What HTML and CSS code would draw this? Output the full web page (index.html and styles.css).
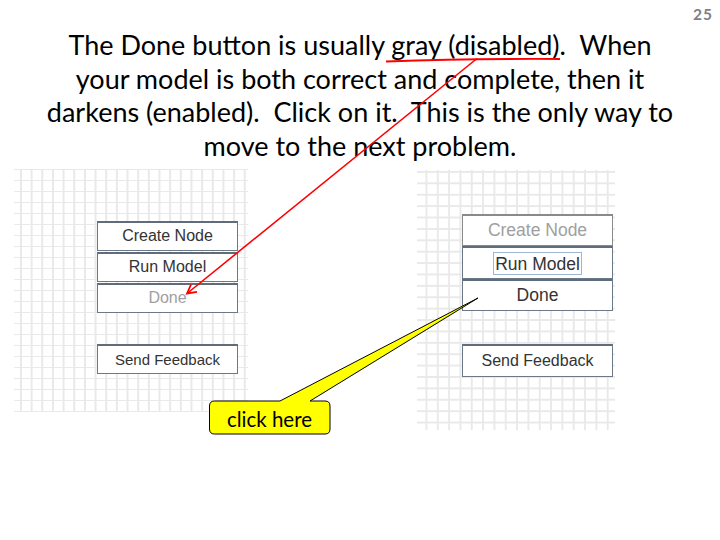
FILE: index.html
```html
<!DOCTYPE html>
<html>
<head>
<meta charset="utf-8">
<link rel="stylesheet" href="styles.css">
</head>
<body>
<div class="slide">
  <div class="num">25</div>
  <p class="title">The Done button is usually gray (disabled).&nbsp; When<br>your model is both correct and complete, then it<br>darkens (enabled).&nbsp; Click on it.&nbsp; This is the only way to<br>move to the next problem.</p>
  <div class="shots">
    <div class="grid grid-left">
      <div class="stack">
        <div class="btn">Create Node</div>
        <div class="btn">Run Model</div>
        <div class="btn off">Done</div>
      </div>
      <div class="btn feedback">Send Feedback</div>
    </div>
    <div class="grid grid-right">
      <div class="stack">
        <div class="btn off grayb">Create Node</div>
        <div class="btn"><span class="focus">Run Model</span></div>
        <div class="btn">Done</div>
      </div>
      <div class="btn feedback">Send Feedback</div>
    </div>
  </div>
  <svg class="overlay" width="720" height="540" viewBox="0 0 720 540">
    <path d="M386 61.5 Q 470 58.5 560 59" fill="none" stroke="#f00" stroke-width="1.8"/>
    <line x1="477" y1="58.5" x2="187" y2="293.5" stroke="#f00" stroke-width="1.6"/>
    <polyline points="197,291.8 187,293.5 191,284.6" fill="none" stroke="#f00" stroke-width="1.8" stroke-linejoin="miter"/>
    <path d="M214.5 401 H280 L478 298 L310 401 H325 Q330 401 330 406 V429 Q330 434 325 434 H214.5 Q209.5 434 209.5 429 V406 Q209.5 401 214.5 401 Z" fill="#ffff00" stroke="#000" stroke-width="1"/>
    <text x="269.5" y="427" class="callout-text" text-anchor="middle">click here</text>
  </svg>
</div>
</body>
</html>
```
FILE: styles.css
```css
html, body {
  margin: 0;
  padding: 0;
  background: #fff;
}
.slide {
  position: relative;
  width: 720px;
  height: 540px;
  overflow: hidden;
  font-family: Lato, "Open Sans", sans-serif;
}
.num {
  position: absolute;
  top: 5px;
  right: 7px;
  font-family: Lato, sans-serif;
  font-weight: bold;
  font-size: 15.5px;
  letter-spacing: 1px;
  color: #7f7f7f;
}
.title {
  margin: 0;
  padding-top: 28px;
  text-align: center;
  font-size: 27px;
  line-height: 33.7px;
  color: #000;
}
.shots {
  display: flex;
  align-items: flex-start;
  padding-left: 14px;
  margin-top: 6px;
}
.grid {
  box-sizing: border-box;
  background-color: #fff;
  background-image:
    linear-gradient(to right, #e9e9e9 1.5px, transparent 1.5px),
    linear-gradient(to bottom, #e9e9e9 1.5px, transparent 1.5px);
}
.grid-left {
  width: 234px;
  height: 243px;
  padding: 52px 0 0 83px;
  background-size: 10.67px 11px;
  background-position: 6px 0px;
}
.grid-right {
  width: 198px;
  height: 260px;
  margin-left: 169px;
  margin-top: 1px;
  padding: 44px 0 0 45px;
  background-size: 11.33px 11.4px;
  background-position: 8.5px 1px;
}
.stack {
  display: flex;
  flex-direction: column;
  gap: 1px;
}
.btn {
  box-sizing: border-box;
  display: flex;
  align-items: center;
  justify-content: center;
  background: #fff;
  border: 1px solid #6b7888;
  border-top: 2px solid #5f6c7c;
  font-family: "Liberation Sans", Arial, sans-serif;
  color: #333;
}
.grid-left .btn {
  width: 141px;
  height: 30px;
  font-size: 16px;
}
.grid-left .feedback {
  margin-top: 31px;
  font-size: 15px;
}
.grid-right .stack {
  gap: 0;
}
.grid-right .btn {
  width: 151px;
  height: 32.5px;
  font-size: 17.5px;
}
.grid-right .feedback {
  margin-top: 33px;
  font-size: 16px;
}
.off {
  color: #a0a0a0;
}
.grayb {
  border-color: #8a8a8a;
}
.focus {
  border: 1px solid #9fb6d3;
  padding: 1px 1px 0 1px;
  line-height: 20px;
}
.overlay {
  position: absolute;
  left: 0;
  top: 0;
}
.callout-text {
  font-family: Lato, sans-serif;
  font-size: 20.5px;
  fill: #000;
}
```
